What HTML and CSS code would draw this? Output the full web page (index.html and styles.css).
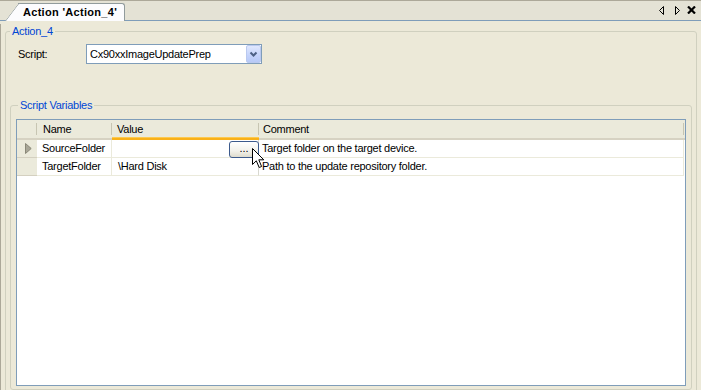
FILE: index.html
```html
<!DOCTYPE html>
<html>
<head>
<meta charset="utf-8">
<link rel="stylesheet" href="styles.css">
</head>
<body>
<div class="window">
  <div class="tabstrip">
    <div class="tab"><span class="tab-label">Action 'Action_4'</span></div>
    <div class="tab-nav">
      <svg class="nav-prev" width="6" height="9" viewBox="0 0 6 9"><polygon points="4.5,0.5 0.5,4.5 4.5,8.5" fill="none" stroke="#000" stroke-width="1"/></svg>
      <svg class="nav-next" width="6" height="9" viewBox="0 0 6 9"><polygon points="1.5,0.5 5.5,4.5 1.5,8.5" fill="none" stroke="#000" stroke-width="1"/></svg>
      <svg class="nav-close" width="9" height="8" viewBox="0 0 9 8"><path d="M1,0.5 L8,7.5 M8,0.5 L1,7.5" stroke="#000" stroke-width="2.2"/></svg>
    </div>
  </div>
  <div class="body">
    <fieldset class="group group-action">
      <legend>Action_4</legend>
      <div class="script-row">
        <span class="script-label">Script:</span>
        <div class="combo">
          <span class="combo-text">Cx90xxImageUpdatePrep</span>
          <span class="combo-btn"><svg width="13" height="16" viewBox="0 0 13 16"><path d="M3.5,6.5 L6.5,9.5 L9.5,6.5" fill="none" stroke="#4d6185" stroke-width="2"/></svg></span>
        </div>
      </div>
      <fieldset class="group group-vars">
        <legend>Script Variables</legend>
        <div class="grid">
          <div class="grid-row grid-head">
            <div class="hcell"></div>
            <div class="hcell hcell-name">Name</div>
            <div class="hcell hcell-value hot">Value</div>
            <div class="hcell hcell-comment">Comment</div>
            <div class="hcell hcell-fill"></div>
          </div>
          <div class="grid-row">
            <div class="cell rh"><svg width="7" height="11" viewBox="0 0 7 11"><polygon points="0.5,0.5 6.2,5.5 0.5,10.5" fill="#a8a697" stroke="#8a8878" stroke-width="1"/></svg></div>
            <div class="cell c-name">SourceFolder</div>
            <div class="cell c-value c-edit"><span class="ellipsis-btn">...</span></div>
            <div class="cell c-comment">Target folder on the target device.</div>
            <div class="cell c-fill"></div>
          </div>
          <div class="grid-row">
            <div class="cell rh"></div>
            <div class="cell c-name">TargetFolder</div>
            <div class="cell c-value">\Hard Disk</div>
            <div class="cell c-comment">Path to the update repository folder.</div>
            <div class="cell c-fill"></div>
          </div>
        </div>
      </fieldset>
    </fieldset>
  </div>
  <svg class="cursor" width="13" height="21" viewBox="0 0 13 21"><path d="M0.5,0.5 L0.5,16.5 L4.3,12.8 L7.2,19.5 L9.6,18.5 L6.8,11.8 L11.8,11.8 Z" fill="#fff" stroke="#000" stroke-width="1" stroke-linejoin="miter"/></svg>
</div>
</body>
</html>
```
FILE: styles.css
```css
* { box-sizing: border-box; }
html, body { margin: 0; padding: 0; }
body {
  font-family: "Liberation Sans", Arial, sans-serif;
  font-size: 11px;
  letter-spacing: -0.25px;
  color: #000;
  background: #ece9d8;
}
.window {
  position: relative;
  width: 701px;
  height: 390px;
  overflow: hidden;
  background: #ece9d8;
}
.tabstrip {
  display: flex;
  height: 21px;
  background: #e4e2d5;
  border-top: 1px solid #aca899;
  border-bottom: 1px solid #7f9db9;
}
.tab {
  position: relative;
  margin-left: 18px;
  margin-top: 2px;
  width: 107px;
  height: 18px;
  padding-left: 5px;
  background: #fcfcfe;
  border-top: 1px solid #919b9c;
  border-right: 1px solid #919b9c;
  border-top-right-radius: 3px;
  font-weight: bold;
  letter-spacing: 0.3px;
  line-height: 16px;
  white-space: nowrap;
}
.tab::before {
  content: "";
  position: absolute;
  left: -13px;
  top: -1px;
  bottom: 0;
  width: 20px;
  background: #fcfcfe;
  border-top: 1px solid #919b9c;
  border-left: 1px solid #919b9c;
  border-top-left-radius: 2px;
  transform-origin: bottom left;
  transform: skewX(-37deg);
}
.tab-label { position: relative; }
.tab-nav {
  margin-left: auto;
  display: flex;
  align-items: center;
  padding-right: 5px;
  padding-bottom: 1px;
}
.tab-nav svg { display: block; }
.nav-next { margin-left: 9px; }
.nav-close { margin-left: 7px; }

.body {
  height: 369px;
  border-left: 1px solid #aca899;
  padding: 0 4px;
}
.group {
  margin: 0;
  padding: 0;
  min-width: 0;
  border: 1px solid #d0d0bf;
  border-radius: 3px;
}
.group legend {
  padding: 0 2px;
  color: #0046d5;
  line-height: 14px;
  font-size: 11px;
}
.group-action {
  margin-top: 3px;
  padding: 0 4px;
  height: 400px;
}
.script-row {
  display: flex;
  align-items: center;
  margin-top: 6px;
}
.script-label {
  width: 68px;
  margin-left: 8px;
}
.combo {
  display: flex;
  align-items: center;
  width: 176px;
  height: 20px;
  border: 1px solid #7f9db9;
  background: #fff;
}
.combo-text {
  flex: 1;
  padding-left: 3px;
  white-space: nowrap;
}
.combo-btn {
  display: flex;
  align-items: center;
  justify-content: center;
  width: 15px;
  height: 18px;
  border: 1px solid #bac9ef;
  border-radius: 2px;
  background: linear-gradient(#e0e8fe, #c4d3fb 60%, #b7c9f7);
}
.combo-btn svg { display: block; }

.group-vars {
  margin-top: 34px;
  padding: 0 5px 3px 5px;
}
.group-vars legend { margin-left: 2px; }
.grid {
  margin-top: 7px;
  height: 267px;
  border: 1px solid #7f9db9;
  background: #fff;
}
.grid-row {
  display: grid;
  grid-template-columns: 20px 75px 147px 425px 1fr;
}
.grid-head { background: #ebeadb; }
.hcell {
  position: relative;
  height: 20px;
  border-bottom: 2px solid #d6d2c2;
  line-height: 18px;
  white-space: nowrap;
}
.hcell::after {
  content: "";
  position: absolute;
  right: 0;
  top: 3px;
  width: 1px;
  height: 12px;
  background: #c7c5b2;
}
.hcell-fill::after { display: none; }
.hcell-name { padding-left: 6px; }
.hcell-value { padding-left: 5px; }
.hcell-comment { padding-left: 4px; }
.hot {
  border-bottom-color: #f9b119;
  box-shadow: inset 0 -1px #fcc94f;
}
.cell {
  height: 18px;
  line-height: 17px;
  border-bottom: 1px solid #ebeadb;
  border-right: 1px solid #ebeadb;
  white-space: nowrap;
  overflow: hidden;
}
.rh {
  display: flex;
  align-items: center;
  padding-left: 8px;
  background: #ebeadb;
  border-right: none;
  border-bottom-color: #d4d0c0;
}
.rh svg { display: block; }
.c-name { padding-left: 5px; }
.c-value { padding-left: 6px; border-right-color: #d8d8d0; }
.c-comment { padding-left: 3px; }
.c-fill { border: none; }
.c-edit {
  display: flex;
  justify-content: flex-end;
  align-items: flex-start;
  padding: 0;
  overflow: visible;
}
.ellipsis-btn {
  display: block;
  width: 30px;
  height: 17px;
  margin-top: 1px;
  margin-right: -1px;
  border: 1px solid #3c5a8c;
  border-radius: 3px;
  background: linear-gradient(#ffffff, #f2f1ea 60%, #dedbcd);
  text-align: center;
  line-height: 13px;
  letter-spacing: 0;
}
.cursor {
  position: absolute;
  left: 252px;
  top: 148px;
}
```
